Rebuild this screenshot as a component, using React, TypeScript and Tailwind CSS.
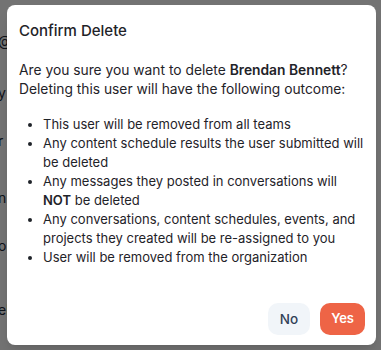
const bgLines = [
  { t: "@", y: "mt-[34px]" },
  { t: "y", y: "mt-[38px]" },
  { t: "r", y: "mt-[34px]" },
  { t: "n", y: "mt-[43px]" },
  { t: "o", y: "mt-[34px]" },
];

export default function App() {
  return (
    <div className="relative h-[350px] w-[381px] overflow-hidden bg-white font-['Inter',sans-serif]">
      {/* page behind the modal */}
      <div className="flex flex-col text-[14px] leading-[14px] text-gray-800">
        {bgLines.map((l, i) => (
          <span key={i} className={`${l.y} -ml-[2px]`}>
            {l.t}
          </span>
        ))}
        <span className="mt-[50px] -ml-[2px]">
          e<span className="text-orange-600">l</span>
        </span>
      </div>
      <div className="absolute inset-0 bg-black/55" />

      <div className="absolute left-[7px] top-[5px] flex h-[340px] w-[369px] flex-col rounded-lg bg-white pl-3 pr-[11px] pb-[10px] pt-[15px] text-[#1f2329] shadow-lg">
        <h2 className="text-[15px] font-medium leading-[21px]">Confirm Delete</h2>
        <p className="mt-[20px] text-[13.8px] leading-[19.2px]">
          Are you sure you want to delete <b className="font-semibold">Brendan Bennett</b>?
          <br />
          Deleting this user will have the following outcome:
        </p>
        <ul className="mt-[16px] list-disc pl-[24px] text-[13px] leading-[19px]">
          <li>This user will be removed from all teams</li>
          <li>Any content schedule results the user submitted will be deleted</li>
          <li>
            Any messages they posted in conversations will <b className="font-semibold">NOT</b> be deleted
          </li>
          <li>
            Any conversations, content schedules, events, and projects they created will be re-assigned to you
          </li>
          <li>User will be removed from the organization</li>
        </ul>
        <div className="mt-auto flex justify-end gap-[10px]">
          <button className="h-[32px] rounded-[10px] bg-slate-100 px-[12px] text-[13.5px] font-medium text-slate-700">
            No
          </button>
          <button className="h-[32px] rounded-[10px] bg-[#ee6446] px-[11px] text-[13px] font-semibold text-white">
            Yes
          </button>
        </div>
      </div>
    </div>
  );
}
